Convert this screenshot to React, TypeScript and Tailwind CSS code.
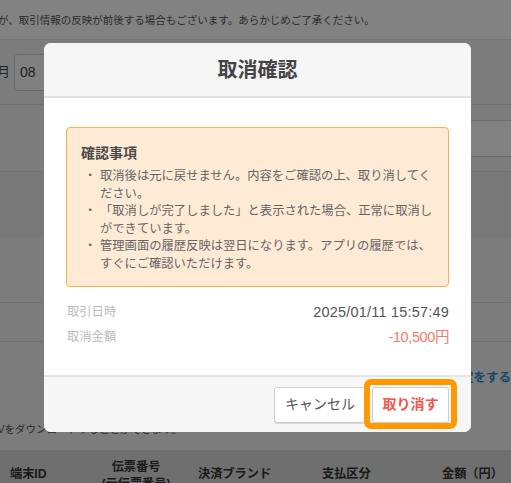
import React from 'react';

const notes = [
    '取消後は元に戻せません。内容をご確認の上、取り消してください。',
    '「取消しが完了しました」と表示された場合、正常に取消しができています。',
    '管理画面の履歴反映は翌日になります。アプリの履歴では、すぐにご確認いただけます。',
];

const CancelConfirmModal: React.FC = () => {
    return (
        <div className="flex h-[389px] w-[427px] flex-col overflow-hidden rounded-[7px] bg-white">
            <div className="flex h-[55px] shrink-0 items-center justify-center border-b-2 border-[#e2e2e2] bg-[#f6f6f6]">
                <h2 className="text-[20px] font-bold leading-[24px] text-[#444]">取消確認</h2>
            </div>

            <div className="flex-1 px-[22px] pt-[29px]">
                <div className="h-[160px] rounded-[4px] border-[1.5px] border-[#f6b24e] bg-[#feead5] pl-[14px] pt-[15px]">
                    <p className="text-[14px] font-bold leading-[20px] text-[#4a4a4a]">確認事項</p>
                    <ul className="mt-[5px] pl-[3px] text-[12.3px] leading-[17.6px] text-[#666]">
                        {notes.map((n) => (
                            <li key={n} className="flex">
                                <span className="w-[16px] shrink-0">・</span>
                                <span className="w-[334px]">{n}</span>
                            </li>
                        ))}
                    </ul>
                </div>

                <dl className="mt-[16px] flex flex-col gap-[7px] pl-[1px]">
                    <div className="flex items-center justify-between leading-[18px]">
                        <dt className="text-[12.3px] text-[#bbb]">取引日時</dt>
                        <dd className="text-[14.5px] tracking-[0.2px] text-[#555]">2025/01/11 15:57:49</dd>
                    </div>
                    <div className="flex items-center justify-between leading-[18px]">
                        <dt className="text-[12.3px] text-[#bbb]">取消金額</dt>
                        <dd className="text-[14.5px] tracking-[-0.4px] text-[#f47a6a]">-10,500円</dd>
                    </div>
                </dl>
            </div>

            <div className="flex h-[57px] shrink-0 items-center justify-end gap-[6px] border-t-2 border-[#e4e4e4] bg-[#f6f6f6] pr-[22px]">
                <button className="h-[36px] w-[92px] rounded-[3px] border border-[#cfcfcf] bg-white text-[14px] text-[#555] shadow-[0_1px_0_#d8d8d8]">
                    キャンセル
                </button>
                <div className="relative">
                    <button className="h-[36px] w-[77px] rounded-[3px] border border-[#cfcfcf] bg-white text-[14px] font-bold text-[#f0574c] shadow-[0_1px_0_#d8d8d8]">
                        取り消す
                    </button>
                    <span className="pointer-events-none absolute -bottom-[6px] -left-[8px] -right-[8px] -top-[8px] rounded-[7px] border-[6px] border-[#ff9900]" />
                </div>
            </div>
        </div>
    );
};

export default function App() {
    return (
        <div className="relative h-[483px] w-[511px] overflow-hidden bg-[#f3f3f3] font-['Liberation_Sans','Noto_Sans_CJK_JP',sans-serif]">
            <div className="flex h-[40px] items-center border-b border-[#e6e6e6] bg-white">
                <p className="-ml-[2px] whitespace-nowrap text-[10.5px] leading-[14px] text-[#555]">
                    が、取引情報の反映が前後する場合もございます。あらかじめご了承ください。
                </p>
            </div>

            <div className="flex h-[65px] items-center gap-[4px] border-b border-[#d9d9d9]">
                <span className="-ml-[3px] text-[13px] text-[#444]">月</span>
                <div className="flex h-[37px] w-[80px] items-center rounded-[4px] border border-[#cfcfcf] bg-[#fbfbfb] pl-[5px] text-[14px] text-[#444]">
                    08
                </div>
            </div>

            <div className="flex h-[67px] items-center justify-end border-b border-[#d9d9d9]">
                <div className="-mr-[10px] h-[37px] w-[220px] rounded-[4px] border border-[#d4d4d4] bg-white" />
            </div>

            <div className="h-[65px] bg-[#ebebeb]" />
            <div className="h-[66px] border-b border-[#d9d9d9]" />
            <div className="h-[39px] border-b border-[#d9d9d9]" />

            <div className="flex h-[108px] flex-col justify-between pb-[14px] pt-[28px]">
                <p className="self-end whitespace-nowrap text-[12.5px] font-bold leading-[16px] text-[#2a8cc6]">
                    表示項目の設定をする
                </p>
                <p className="-ml-[17px] whitespace-nowrap text-[10.5px] leading-[14px] text-[#555]">
                    CSVをダウンロードすることができます。
                </p>
            </div>

            <div className="flex h-[40px] items-start bg-[#dadada] pt-[16px] text-[12.2px] font-bold leading-[17px] text-[#333]">
                <div className="w-[112px] shrink-0 pl-[10px]">端末ID</div>
                <div className="-mt-[7px] flex w-[86px] shrink-0 flex-col items-center pr-[38px]">
                    <span className="whitespace-nowrap">伝票番号</span>
                    <span className="whitespace-nowrap">(元伝票番号)</span>
                </div>
                <div className="w-[124px] shrink-0">決済ブランド</div>
                <div className="w-[120px] shrink-0">支払区分</div>
                <div className="shrink-0 whitespace-nowrap">金額（円）</div>
            </div>

            <div className="absolute inset-0 flex items-start justify-center bg-black/[0.49] pl-[4px] pt-[43px]">
                <CancelConfirmModal />
            </div>
        </div>
    );
}
